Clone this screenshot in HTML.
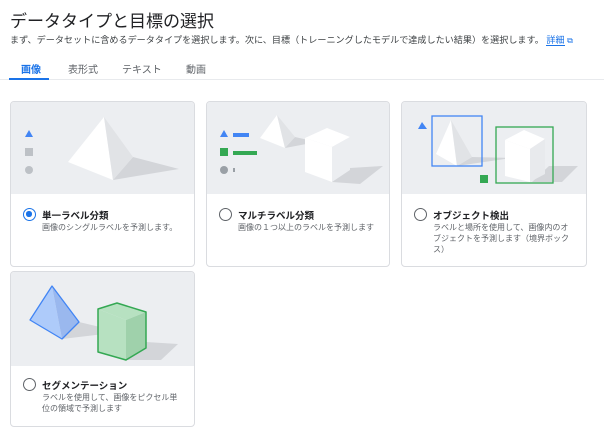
<!DOCTYPE html>
<html><head><meta charset="utf-8"><style>
*{box-sizing:border-box;margin:0;padding:0}
body{width:604px;height:436px;background:#fff;font-family:"Liberation Sans","Noto Sans CJK JP",sans-serif;color:#202124;position:relative;overflow:hidden}
.abs{position:absolute;white-space:nowrap}
h1{position:absolute;left:10px;top:7px;font-size:17px;font-weight:400;color:#202124}
.desc{left:10px;top:32px;font-size:9.1px;color:#3c4043}
.link{color:#1a73e8;border-bottom:1px solid #1a73e8}
.tab{top:61px;font-size:10px;color:#5f6368}
.tabline{left:0;top:79px;width:604px;height:1px;background:#e8eaed}
.under{left:9px;top:78px;width:40px;height:2px;background:#1a73e8}
.card{position:absolute;border:1px solid #dadce0;border-radius:4px;overflow:hidden;background:#fff}
.img{position:absolute;left:0;top:0;width:100%;background:#eceef1}
.radio{position:absolute;left:12px;width:13px;height:13px;border:1.6px solid #5f6368;border-radius:50%}
.radio.on{border-color:#1a73e8}
.radio.on:after{content:"";position:absolute;left:2.2px;top:2.2px;width:5.4px;height:5.4px;border-radius:50%;background:#1a73e8}
.lab{position:absolute;left:31px;font-size:9.5px;font-weight:700;color:#202124;white-space:nowrap}
.sub{position:absolute;left:31px;font-size:8px;color:#5f6368;line-height:11px}
</style></head><body>
<h1>データタイプと目標の選択</h1>
<div class="abs desc">まず、データセットに含めるデータタイプを選択します。次に、目標（トレーニングしたモデルで達成したい結果）を選択します。 <span class="link">詳細</span> <span style="color:#1a73e8;font-size:8px">⧉</span></div>
<div class="abs tab" style="left:21px;color:#1a73e8;font-weight:700">画像</div>
<div class="abs tab" style="left:68px">表形式</div>
<div class="abs tab" style="left:122px">テキスト</div>
<div class="abs tab" style="left:186px">動画</div>
<div class="abs tabline"></div>
<div class="abs under"></div>

<div class="card" style="left:10px;top:101px;width:185px;height:166px">
<div class="img" style="height:92px"><svg width="185" height="92">
<polygon points="14,35 18,28 22,35" fill="#4285f4"/>
<rect x="14" y="46" width="8" height="8" fill="#bdc1c6"/>
<circle cx="18" cy="68" r="4" fill="#bdc1c6"/>
<polygon points="122,55 102,78 168,67" fill="#d3d5d9"/>
<polygon points="93,15 57,60 102,78" fill="#fff"/>
<polygon points="93,15 102,78 122,55" fill="#e1e3e6"/>
</svg></div>
<div class="radio on" style="top:106px"></div>
<div class="lab" style="top:106px">単一ラベル分類</div>
<div class="sub" style="top:120px">画像のシングルラベルを予測します。</div>
</div>

<div class="card" style="left:206px;top:101px;width:184px;height:166px">
<div class="img" style="height:92px"><svg width="184" height="92">
<polygon points="13,35 17,28 21,35" fill="#4285f4"/>
<rect x="26" y="31" width="16" height="4" fill="#4285f4"/>
<rect x="13" y="46" width="8" height="8" fill="#34a853"/>
<rect x="26" y="49" width="24" height="4" fill="#34a853"/>
<circle cx="17" cy="68" r="4" fill="#9aa0a6"/>
<rect x="26" y="66" width="2" height="4" fill="#9aa0a6"/>
<polygon points="88,35 78,46 110,40" fill="#d3d5d9"/>
<polygon points="70,13 53,36 78,46" fill="#fff"/>
<polygon points="70,13 78,46 88,35" fill="#e1e3e6"/>
<polygon points="143,66 125,80 153,82 176,64" fill="#d3d5d9"/>
<polygon points="98,36 120,26 143,35 125,45" fill="#fff"/>
<polygon points="98,36 125,45 125,80 98,70" fill="#fff"/>
<polygon points="125,45 143,35 143,68 125,80" fill="#eceef1"/>
</svg></div>
<div class="radio" style="top:106px"></div>
<div class="lab" style="top:106px">マルチラベル分類</div>
<div class="sub" style="top:120px">画像の１つ以上のラベルを予測します</div>
</div>

<div class="card" style="left:401px;top:101px;width:186px;height:166px">
<div class="img" style="height:92px"><svg width="186" height="92">
<polygon points="16,27 20,20 25,27" fill="#4285f4"/>
<polygon points="70,55 55,64 110,56" fill="#d3d5d9"/>
<polygon points="49,18 34,52 55,64" fill="#fff"/>
<polygon points="49,18 55,64 70,55" fill="#e1e3e6"/>
<rect x="30" y="14" width="50" height="50" fill="none" stroke="#4285f4" stroke-width="1.3"/>
<rect x="78" y="73" width="8" height="8" fill="#34a853"/>
<polygon points="147,64 130,80 160,80 176,64" fill="#d3d5d9"/>
<polygon points="103,38 122,28 143,37 128,47" fill="#fff"/>
<polygon points="103,38 128,47 128,80 103,74" fill="#fff"/>
<polygon points="128,47 143,37 143,72 128,80" fill="#e8eaed"/>
<rect x="94" y="25" width="57" height="56" fill="none" stroke="#34a853" stroke-width="1.3"/>
</svg></div>
<div class="radio" style="top:106px"></div>
<div class="lab" style="top:106px">オブジェクト検出</div>
<div class="sub" style="top:120px">ラベルと場所を使用して、画像内のオ<br>ブジェクトを予測します（境界ボック<br>ス）</div>
</div>

<div class="card" style="left:10px;top:271px;width:185px;height:156px">
<div class="img" style="height:94px"><svg width="185" height="94">
<polygon points="68,50 51,67 110,60" fill="#d3d5d9"/>
<polygon points="135,70 115,88 150,88 167,72" fill="#d3d5d9"/>
<polygon points="41,14 19,48 51,67" fill="#aecbfa"/>
<polygon points="41,14 51,67 68,50" fill="#9ab8ee"/>
<polygon points="41,14 19,48 51,67 68,50" fill="none" stroke="#4285f4" stroke-width="1.3" stroke-linejoin="round"/>
<polygon points="87,37 106,31 135,40 115,48" fill="#b7e1c1"/>
<polygon points="87,37 115,48 115,88 87,80" fill="#b7e1c1"/>
<polygon points="115,48 135,40 135,76 115,88" fill="#9fd1ab"/>
<polygon points="87,37 106,31 135,40 135,76 115,88 87,80" fill="none" stroke="#34a853" stroke-width="1.5" stroke-linejoin="round"/>
</svg></div>
<div class="radio" style="top:106px"></div>
<div class="lab" style="top:106px">セグメンテーション</div>
<div class="sub" style="top:120px">ラベルを使用して、画像をピクセル単<br>位の領域で予測します</div>
</div>
</body></html>
